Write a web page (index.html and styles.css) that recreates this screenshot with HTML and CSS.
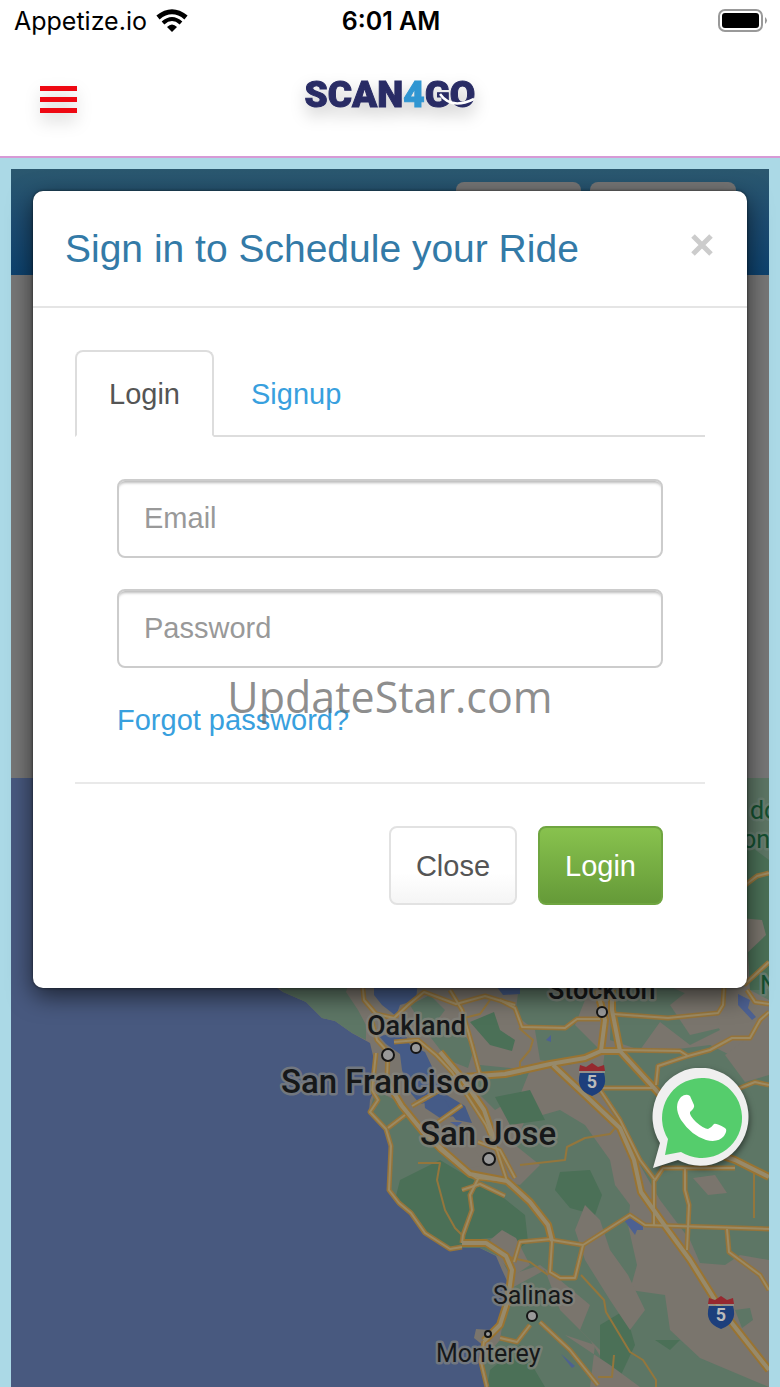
FILE: index.html
```html
<!DOCTYPE html>
<html lang="en">
    <head>
        <meta charset="utf-8">
        <meta name="viewport" content="width=device-width, initial-scale=1">
        <title>Scan4Go</title>
        <link rel="stylesheet" href="styles.css">
    </head>
    <body>
        <div class="statusbar">
            <div class="carrier">
                <span>Appetize.io</span>
                <svg width="32" height="24" viewBox="0 0 32 24" fill="none" stroke="#000">
                    <path d="M2 8.500Q16 -3 30 8.500" stroke-width="5"/>
                    <path d="M7 14Q16 6 25 14" stroke-width="4"/>
                    <path d="M11 18Q16 13 21 18L16 23z" fill="#000" stroke="none"/>
                </svg>
            </div>
            <time class="clock">6:01 AM</time>
            <svg class="battery" width="50" height="24" viewBox="0 0 50 24">
                <rect x="1" y="1" width="43" height="21" rx="6" fill="none" stroke="#999" stroke-width="2"/>
                <rect x="4" y="4" width="37" height="15" rx="3" fill="#000"/>
                <path d="M47 8q4 3.500 0 7z" fill="#999"/>
            </svg>
        </div>
        <header class="navbar">
            <button type="button" class="menu" aria-label="Menu"><i></i><i></i><i></i></button>
            <a href="#" class="logo">SCAN<span>4</span>GO<svg class="swoosh" width="36" height="18" viewBox="0 0 36 18"><path d="M1 1Q12 17 35 6" fill="none" stroke="#fff" stroke-width="2.500"/></svg></a>
        </header>
        <main class="frame">
            <div class="toolbar">
                <button type="button" class="tool tool-small" aria-label="Login"></button>
                <button type="button" class="tool" aria-label="Schedule"></button>
            </div>
            <div class="panel"></div>
            <svg class="map" viewBox="11 778 758 609" preserveAspectRatio="xMidYMin slice">
                <rect class="ocean" x="0" y="770" width="800" height="630"/>
                <path class="land" d="M262 978L283 992L306 1002L322 1018L335 1021L352 1033L370 1043L374 1060L377 1083L370 1100L369 1112L386 1129L391 1146L389 1190L399 1203L411 1213L425 1233L450 1249L462 1248L480 1248L496 1256L502 1270L508 1283L507 1303L500 1320L490 1330L476 1329L474 1338L484 1346L481 1362L487 1390H780V770H700V970z"/>
                <g class="green">
                    <path d="M275 982L283 992L306 1002L322 1018L335 1021L352 1033L366 1040L366 1025L358 1010L346 992L350 978z"/>
                    <path d="M410 1005L430 995L445 1010L436 1022L455 1028L475 1045L468 1068L448 1060L425 1030z"/>
                    <path d="M520 980H560L585 1000L575 1025L600 1050L570 1065L540 1060L535 1030L515 1015z"/>
                    <path d="M612 990L660 982L700 1000L720 1030L690 1045L660 1022L640 1050L610 1040z"/>
                    <path d="M605 1050H670L710 1045L740 1060L769 1050V1260L740 1255L725 1265L700 1263L690 1240L660 1200L640 1165L625 1125L600 1090z"/>
                    <path d="M376 1090L395 1100L420 1130L440 1150L470 1170L490 1180L520 1185L540 1165L515 1145L525 1120L560 1110L585 1125L610 1160L615 1185L630 1205L628 1225L637 1265L630 1290L665 1295L670 1330L700 1358L769 1387H610L600 1350L580 1330L590 1305L560 1280L540 1265L510 1275L500 1257L480 1248H455L425 1233L411 1213L399 1203L389 1190L391 1146L386 1129L369 1112z"/>
                    <path d="M508 1290L545 1270L560 1310L590 1340L620 1387H487L481 1362L500 1340z"/>
                    <path d="M742 778H769V1000L750 990z"/>
                    <path d="M480 1065L530 1070L520 1095L495 1110L475 1090z"/>
                    <path d="M735 1310L750 1308L753 1320L742 1328z"/>
                </g>
                <g class="wood">
                    <path d="M470 1022L494 1012L500 1030L515 1040L512 1051L490 1045z"/>
                    <path d="M400 1180L440 1160L470 1178L500 1195L525 1215L528 1242L510 1255L500 1237L470 1240L450 1249L425 1233L411 1213L395 1200z"/>
                    <path d="M560 1172L590 1170L602 1195L595 1215L570 1208L555 1190z"/>
                    <path d="M600 1325L625 1310L635 1345L620 1377L600 1360z"/>
                    <path d="M655 1340H680L670 1350z"/>
                    <path d="M490 1370L520 1345L545 1387H487z"/>
                    <path d="M742 840L769 860V990H750z"/>
                    <path d="M495 1097L530 1090L545 1120L510 1125z"/>
                </g>
                <g class="land">
                    <path d="M490 1240L502 1230L516 1238L530 1265L515 1275L500 1260z"/>
                    <path d="M585 1205L600 1220L610 1250L628 1275L645 1310L630 1330L610 1300L585 1260L575 1230z"/>
                    <path d="M670 1005L695 985L715 1010L720 1028L690 1035z"/>
                    <path d="M693 1178L715 1175L727 1193L708 1195z"/>
                    <path d="M725 1055L745 1040L769 1040V1075L745 1082z"/>
                    <path d="M565 1335L595 1345L590 1387H640L610 1365z"/>
                    <path d="M740 918L762 920L766 935L745 955z"/>
                    <path d="M450 1130L475 1150L485 1165L470 1168L450 1150z"/>
                </g>
                <g class="water">
                    <path d="M374 980H418L416 1000L400 1005L396 1016L382 1005L374 995z"/>
                    <path d="M379 1036L404 1032L410 1045L425 1052L436 1075L445 1094L465 1106L472 1123L456 1120L440 1100L420 1104L408 1090L402 1070L400 1054L386 1044z"/>
                    <path d="M424 1098L445 1100L455 1116L440 1118L425 1108z"/>
                    <path d="M490 978H520V994L503 995z"/>
                </g>
                <g class="lake">
                    <path d="M624 1220L635 1217L643 1224V1230H637L635 1235z"/>
                    <path d="M738 994L750 1000L748 1008L756 1017L752 1020L738 1005z"/>
                    <path d="M546 1040L551 1035V1042z"/>
                    <path d="M561 1354L575 1366L572 1368z"/>
                    <path d="M450 1122H462L458 1127z"/>
                </g>
                <g class="minor">
                    <path d="M418 1163L440 1163L437 1180L445 1210L455 1228L462 1235"/>
                    <path d="M500 1255L530 1262L548 1275"/>
                    <path d="M519 1028L533 1040L530 1050L520 1062V1075"/>
                    <path d="M520 1165L565 1160L567 1147L585 1138L610 1134L622 1120"/>
                    <path d="M581 1275L604 1300L606 1312L630 1352L643 1360L656 1380V1387M598 1377H612L614 1355"/>
                    <path d="M754 1172V1218M464 1018L480 1014L490 1000"/>
                </g>
                <defs>
                    <g id="roads">
                        <path d="M362 980L364 1000L376 1014L394 1018L408 1005L424 992L456 1004L485 996L515 1005"/>
                        <path d="M371 1018L377 1040L388 1052L387 1080L400 1105L420 1127L440 1150L462 1168L476 1178L507 1181"/>
                        <path d="M394 1042L418 1040L436 1055L452 1072L470 1100L486 1125L497 1150L507 1181"/>
                        <path d="M412 1106L440 1090M438 1122L462 1105M388 1128L405 1115"/>
                        <path d="M376 1053L372 1090L378 1100L370 1112L386 1129L391 1146L389 1190L399 1203L411 1213L425 1233L450 1249L462 1247"/>
                        <path d="M462 1243L463 1235L472 1210L470 1195L480 1175"/>
                        <path d="M514 1262L520 1242L552 1239M552 1241L550 1272L560 1278H575L583 1245L630 1215L645 1225L769 1229M552 1240L583 1245"/>
                        <path d="M450 990L462 1010L472 1045L480 1075"/>
                        <path d="M500 1000L515 1008L522 1027L565 1028L577 1019L600 1019"/>
                        <path d="M613 1014L668 1018L718 1013L723 1005L725 970"/>
                        <path d="M618 1050L680 1051L688 1056L658 1066L656 1085"/>
                        <path d="M688 1056L710 1050L732 1038H750L760 1020L769 1012"/>
                        <path d="M600 1088H655M600 1090L620 1120L640 1160L655 1180L663 1168H735M654 1180V1225"/>
                        <path d="M685 1168V1190L689 1205L687 1250M727 1229L729 1252L760 1275L769 1290"/>
                        <path d="M735 1090L755 1082L769 1085M747 990L755 1002L769 1004M744 886L757 876L769 873M744 985L769 962"/>
                        <path d="M500 1338L517 1342L530 1325M540 1322L570 1350L598 1385M484 1341L481 1362L487 1387"/>
                        <path d="M462 1190L480 1184L505 1196M478 1142L500 1150L515 1178"/>
                    </g>
                    <g id="freeways">
                        <path d="M450 1078L505 1074L550 1064L585 1058L601 1051L605 1020L597 990M620 1051L612 1010V990"/>
                        <path d="M553 1065L585 1095L620 1128L634 1160L641 1192L665 1226L690 1260L720 1308L769 1370"/>
                        <path d="M601 1051H620L665 1100L690 1145L735 1160L769 1177"/>
                        <path d="M386 1080L402 1106L424 1133L446 1153L470 1174L507 1181L530 1202L548 1225L552 1241"/>
                        <path d="M440 1052L462 1078L484 1110L495 1142"/>
                        <path d="M462 1243L486 1243L506 1256L512 1270L508 1300L500 1325L484 1341"/>
                    </g>
                </defs>
                <use href="#roads" class="road-edge"/>
                <use href="#freeways" class="freeway-edge"/>
                <use href="#roads" class="road-core"/>
                <use href="#freeways" class="freeway-core"/>
                <g class="marks">
                    <circle cx="388" cy="1055" r="6"/>
                    <circle cx="416" cy="1048" r="5"/>
                    <circle cx="489" cy="1159" r="6"/>
                    <circle cx="602" cy="1012" r="5"/>
                    <circle cx="532" cy="1316" r="5"/>
                    <circle cx="488" cy="1334" r="3"/>
                </g>
                <g class="places">
                    <text x="367" y="1035" class="town">Oakland</text>
                    <text x="281" y="1093" class="city">San Francisco</text>
                    <text x="420" y="1145" class="city">San Jose</text>
                    <text x="548" y="999" class="town">Stockton</text>
                    <text x="493" y="1304" class="place">Salinas</text>
                    <text x="436" y="1362" class="place">Monterey</text>
                    <text x="750" y="819" class="place forest">do</text>
                    <text x="742" y="848" class="place forest">on</text>
                    <text x="760" y="994" class="place forest">N</text>
                </g>
                <g id="shield">
                    <path fill="#1d3f7c" d="M580 1073H604Q609 1090 592 1096Q575 1090 580 1073z"/>
                    <path fill="#96282f" d="M580 1065L586 1067L592 1063L598 1067L604 1065L605 1071H579z"/>
                    <path stroke="#aaa" stroke-width="1" d="M579 1072H605"/>
                    <text x="592" y="1088" class="route">5</text>
                </g>
                <use href="#shield" x="129" y="233"/>
            </svg>
            <a href="#" class="whatsapp" aria-label="WhatsApp">
                <svg width="100" height="102" viewBox="0 0 100 102">
                    <path fill="#efefef" d="M2 100L9 75A48 49 0 1 1 27 92z"/>
                    <path fill="#55cd6c" d="M14 87L17 71A40 40 0 1 1 30 84z"/>
                    <path fill="#fff" d="M30 29Q35 25 39 28L43 37Q44 40 39 44Q38 47 45 54Q53 61 57 61Q60 60 63 56Q65 55 74 60Q77 62 73 68Q67 75 55 72Q40 67 30 52Q22 38 30 29z"/>
                </svg>
            </a>
            <section class="modal" role="dialog" aria-labelledby="ModalTitle">
                <div class="modal-header">
                    <h1 id="ModalTitle">Sign in to Schedule your Ride</h1>
                    <button type="button" class="close" aria-label="Close">
                        <svg width="22" height="22" viewBox="0 0 22 22"><path d="M2 2L20 20M20 2L2 20" stroke="#ccc" stroke-width="5"/></svg>
                    </button>
                </div>
                <div class="modal-body">
                    <nav class="tabs">
                        <a href="#login" class="tab active">Login</a>
                        <a href="#signup" class="tab">Signup</a>
                    </nav>
                    <form class="login">
                        <input type="email" class="textinput" placeholder="Email" aria-label="Email">
                        <input type="password" class="textinput" placeholder="Password" aria-label="Password">
                        <a href="#" class="forgot">Forgot password?</a>
                        <div class="buttons">
                            <button type="button" class="btn">Close</button>
                            <button type="submit" class="btn btn-login">Login</button>
                        </div>
                    </form>
                </div>
                <div class="watermark">UpdateStar.com</div>
            </section>
        </main>
    </body>
</html>
```
FILE: styles.css
```css
* {
box-sizing: border-box;
}
body {
margin: 0;
min-height: 100vh;
display: flex;
flex-direction: column;
background-color: #FFF;
font-family: "Liberation Sans", Arial, sans-serif;
font-size: 29px;
line-height: 40px;
}
a {
color: #38A0DE;
text-decoration: none;
}
button, input {
font: inherit;
}
.statusbar {
display: grid;
grid-template-columns: 1fr auto 1fr;
align-items: center;
height: 44px;
padding: 0 12px 2px 14px;
font-family: Inter, sans-serif;
font-size: 25px;
}
.carrier {
display: flex;
align-items: center;
gap: 9px;
}
.clock {
font-weight: 600;
}
.battery {
justify-self: end;
}
.navbar {
display: grid;
grid-template-columns: 1fr auto 1fr;
align-items: center;
height: 114px;
padding: 0 40px 10px;
border-bottom: 2px solid #D79AD6;
}
.menu {
display: flex;
flex-direction: column;
gap: 6px;
width: 37px;
margin-top: 8px;
padding: 0;
border: 0;
background: none;
filter: drop-shadow(0 8px 8px rgba(0,0,0,.2));
}
.menu i {
height: 5px;
width: 100%;
background-color: #EE0812;
}
.logo {
position: relative;
font-family: Roboto, sans-serif;
font-size: 37px;
font-weight: 900;
color: #292C65;
-webkit-text-stroke: 1px;
filter: drop-shadow(0 8px 8px rgba(0,0,0,.2));
}
.logo span {
color: #3096D2;
}
.swoosh {
position: absolute;
right: 0;
bottom: 4px;
}
.frame {
position: relative;
flex: 1;
display: flex;
flex-direction: column;
padding: 11px 11px 0;
background-color: #ABD9E6;
}
.toolbar {
display: flex;
justify-content: flex-end;
align-items: flex-start;
gap: 9px;
height: 106px;
padding: 13px 33px;
background: linear-gradient(#2B586F, #1D4C71 50%, #0D426E);
}
.tool {
width: 146px;
height: 78px;
border: 0;
border-radius: 8px;
background-color: #757575;
}
.tool-small {
width: 125px;
}
.panel {
height: 503px;
background-color: #777;
}
.map {
flex: 1;
display: block;
width: 100%;
height: 609px;
}
.ocean {
fill: #48597F;
}
.land {
fill: #7A756D;
}
.green {
fill: #5D7665;
}
.wood {
fill: #4B7057;
}
.water {
fill: #455B87;
}
.lake {
fill: #4D6192;
}
.minor, .road-edge, .freeway-edge, .road-core, .freeway-core {
fill: none;
stroke-linejoin: round;
}
.minor {
stroke: #94763C;
stroke-width: 2;
}
.road-edge {
stroke: #96743A;
stroke-width: 5;
}
.freeway-edge {
stroke: #9A7432;
stroke-width: 8;
}
.road-core {
stroke: #9C8A62;
stroke-width: 2;
}
.freeway-core {
stroke: #978A6B;
stroke-width: 4;
}
.marks {
fill: #999;
stroke: #151515;
stroke-width: 2;
}
.places {
font-family: Roboto, sans-serif;
fill: #161819;
stroke: rgba(133,133,127,.7);
stroke-width: 5;
stroke-linejoin: round;
paint-order: stroke;
}
.city {
font-size: 33px;
font-weight: 500;
}
.town {
font-size: 27px;
font-weight: 500;
}
.place {
font-size: 25px;
}
.forest {
fill: #144F30;
stroke: #687D70;
}
.route {
font: bold 18px Roboto, sans-serif;
fill: #BBB;
text-anchor: middle;
}
.whatsapp {
position: absolute;
right: 29px;
bottom: 217px;
filter: drop-shadow(1px 3px 3px rgba(0,0,0,.5));
}
.whatsapp svg {
display: block;
}
.modal {
position: absolute;
top: 33px;
left: 33px;
right: 33px;
background-color: #FFF;
border-radius: 10px;
box-shadow: 0 8px 24px rgba(0,0,0,.6), 0 0 3px rgba(0,0,0,.6);
}
.modal-header {
display: flex;
justify-content: space-between;
padding: 32px;
height: 117px;
border-bottom: 2px solid #E5E5E5;
}
.modal-header h1 {
margin: 0;
font-size: 39px;
line-height: 52px;
font-weight: normal;
color: #337AA7;
}
.close {
align-self: flex-start;
display: flex;
padding: 11px 2px;
border: 0;
background: none;
}
.modal-body {
padding: 42px 42px 41px;
}
.tabs {
display: flex;
gap: 3px;
border-bottom: 2px solid #DDD;
}
.tab {
padding: 22px 32px 21px;
margin-bottom: -2px;
border: 2px solid transparent;
border-radius: 8px 8px 0 0;
}
.tab.active {
color: #555;
background-color: #FFF;
border-color: #DDD;
border-bottom-color: #FFF;
}
.login {
display: flex;
flex-direction: column;
align-items: flex-start;
padding-top: 42px;
}
.textinput {
width: calc(100% - 84px);
height: 79px;
margin: 0 42px 31px;
padding: 0 25px;
border: 2px solid #CCC;
border-radius: 8px;
outline: none;
box-shadow: inset 0 4px 3px -2px #BBB;
}
.textinput::placeholder {
color: #999;
opacity: 1;
}
.forgot {
margin: 1px 42px 42px;
}
.buttons {
display: flex;
justify-content: flex-end;
gap: 21px;
width: 100%;
padding: 42px;
border-top: 2px solid #E9E9E9;
}
.btn {
cursor: pointer;
height: 79px;
padding: 0 25px;
color: #555;
background: linear-gradient(#FFF 60%, #F5F5F5);
border: 2px solid #E2E2E2;
border-radius: 8px;
}
.btn-login {
color: #FFF;
background: linear-gradient(#88C24E, #659A38);
border-color: #6FA540;
}
.watermark {
position: absolute;
top: 476px;
left: 0;
right: 0;
text-align: center;
font-family: "Open Sans", sans-serif;
font-size: 43px;
line-height: 60px;
color: rgba(105,105,105,.75);
pointer-events: none;
}
```
